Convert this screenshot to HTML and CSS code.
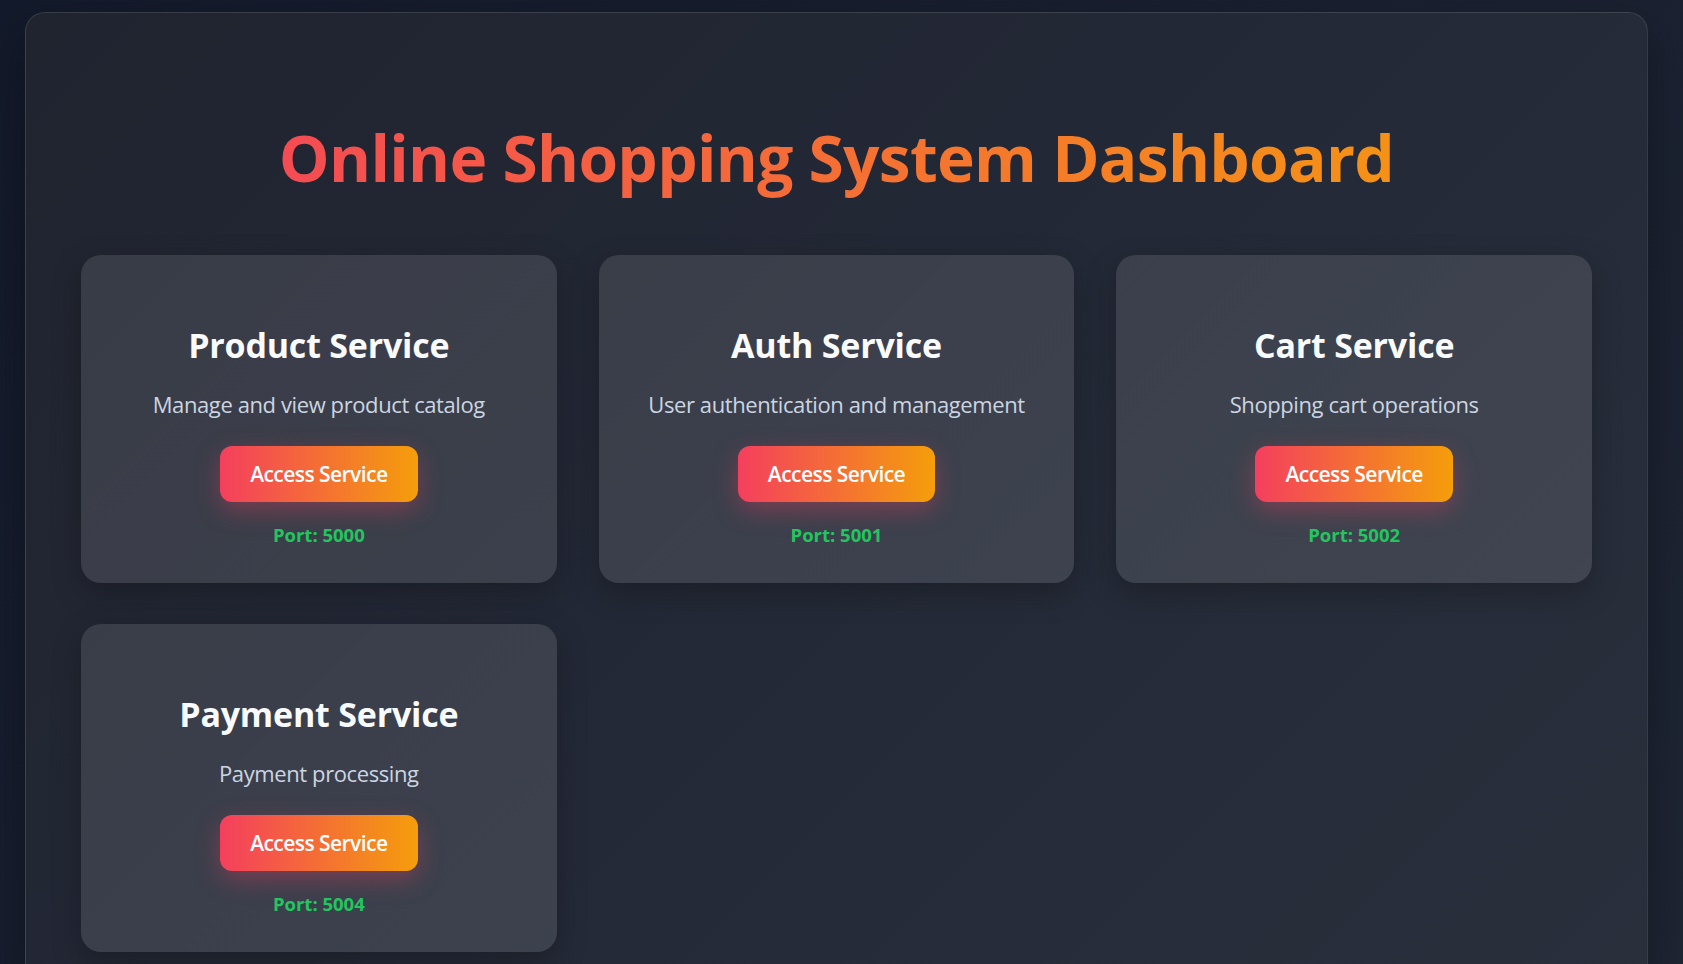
FILE: index.html
```html
<!DOCTYPE html>
<html lang="en">
<head>
<meta charset="UTF-8">
<title>Online Shopping System Dashboard</title>
<link rel="stylesheet" href="styles.css">
</head>
<body>
<div class="container">
  <h1 class="page-title">Online Shopping System Dashboard</h1>
  <div class="services">
    <div class="card">
      <h2 class="card-title">Product Service</h2>
      <p class="card-desc">Manage and view product catalog</p>
      <a class="btn" href="#">Access Service</a>
      <div class="port">Port: 5000</div>
    </div>
    <div class="card">
      <h2 class="card-title">Auth Service</h2>
      <p class="card-desc">User authentication and management</p>
      <a class="btn" href="#">Access Service</a>
      <div class="port">Port: 5001</div>
    </div>
    <div class="card">
      <h2 class="card-title">Cart Service</h2>
      <p class="card-desc">Shopping cart operations</p>
      <a class="btn" href="#">Access Service</a>
      <div class="port">Port: 5002</div>
    </div>
    <div class="card">
      <h2 class="card-title">Payment Service</h2>
      <p class="card-desc">Payment processing</p>
      <a class="btn" href="#">Access Service</a>
      <div class="port">Port: 5004</div>
    </div>
  </div>
</div>
</body>
</html>
```

FILE: styles.css
```css
* { box-sizing: border-box; }

html, body {
  margin: 0;
  padding: 0;
}

body {
  font-family: "Open Sans", "Noto Sans", sans-serif;
  background: linear-gradient(135deg, #131a2b 0%, #1a2030 50%, #1f2634 100%);
  min-height: 100vh;
  padding: 12px 35px 40px 25px;
}

.container {
  border: 1px solid rgba(255, 255, 255, 0.1);
  border-radius: 20px;
  background: linear-gradient(135deg, #20242f 0%, #232836 45%, #29303c 100%);
  box-shadow: 0 20px 50px rgba(0, 0, 0, 0.35);
  padding: 105px 55px 55px;
}

.page-title {
  margin: 0 0 57px;
  font-size: 64px;
  line-height: 80px;
  letter-spacing: -0.7px;
  font-weight: 700;
  text-align: center;
  background: linear-gradient(90deg, #f43f5e, #f59e0b);
  -webkit-background-clip: text;
  background-clip: text;
  color: transparent;
}

.services {
  display: grid;
  grid-template-columns: repeat(3, 1fr);
  gap: 41px 42px;
}

.card {
  background: linear-gradient(135deg, rgba(255,255,255,0.105), rgba(255,255,255,0.115));
  border-radius: 20px;
  box-shadow: 0 10px 30px rgba(0, 0, 0, 0.25);
  padding: 70px 24px 36px;
  height: 328px;
  text-align: center;
  display: flex;
  flex-direction: column;
  align-items: center;
}

.card-title {
  margin: 0 0 24px;
  font-size: 34px;
  line-height: 40px;
  letter-spacing: -0.2px;
  font-weight: 700;
  color: #f8fafc;
}

.card-desc {
  margin: 0 0 27px;
  font-size: 22px;
  line-height: 30px;
  letter-spacing: -0.4px;
  color: #cbd5e1;
}

.btn {
  display: inline-block;
  height: 56px;
  line-height: 56px;
  padding: 0 30px;
  border-radius: 12px;
  background: linear-gradient(90deg, #f43f5e, #f59e0b);
  color: #ffffff;
  font-size: 21px;
  letter-spacing: -0.55px;
  font-weight: 600;
  text-decoration: none;
  box-shadow: 0 8px 25px rgba(244, 63, 94, 0.35);
}

.port {
  margin-top: 21px;
  font-size: 18.5px;
  line-height: 24px;
  font-weight: 700;
  color: #22c55e;
}
```
